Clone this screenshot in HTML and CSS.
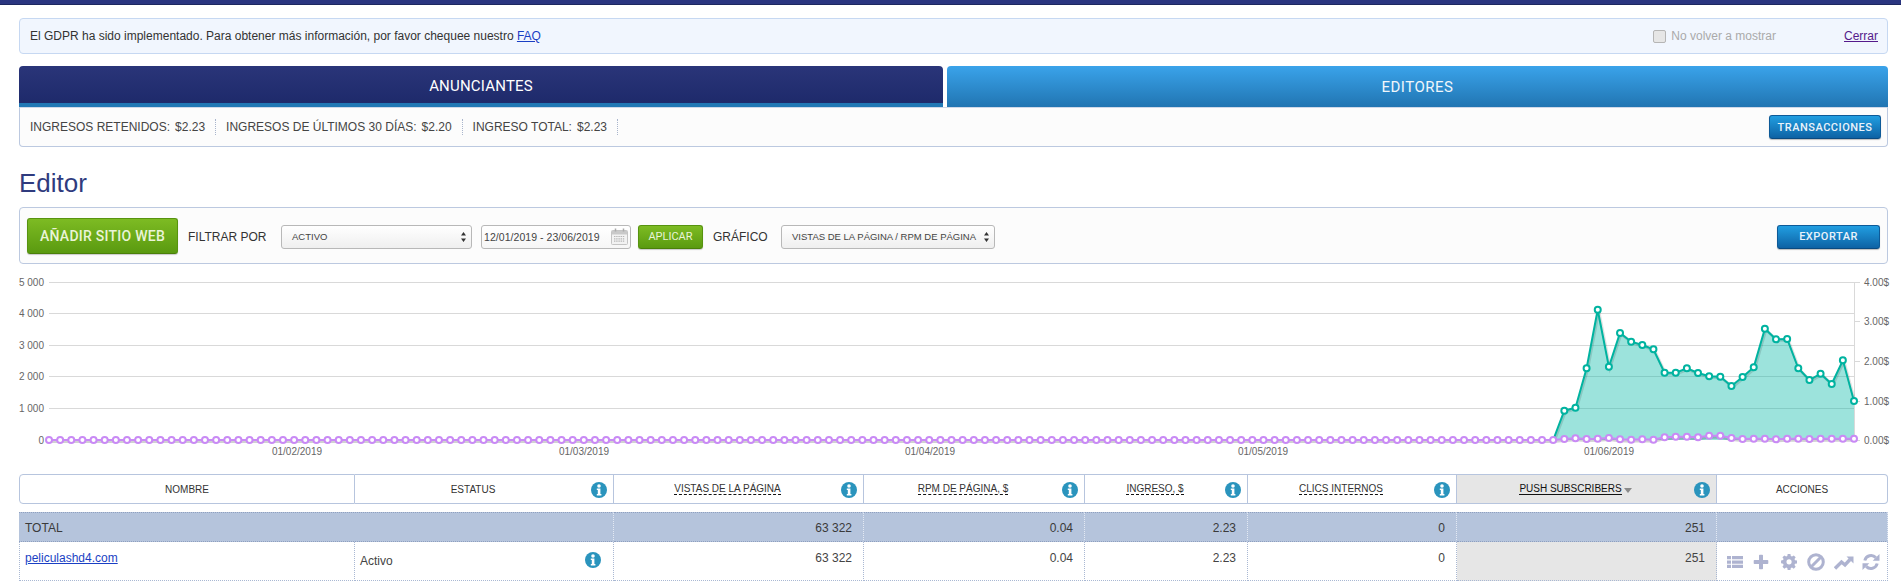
FILE: index.html
```html
<!DOCTYPE html>
<html lang="es">
<head>
<meta charset="utf-8">
<title>Editor</title>
<link rel="stylesheet" href="styles.css">
</head>
<body>
<svg class="defs" aria-hidden="true">
  <symbol id="i-info" viewBox="0 0 16 16"><circle cx="8" cy="8" r="8" fill="#2a94bd"/><circle cx="8" cy="4" r="1.8" fill="#fff"/><path d="M5.8 6.6h3.6v5.3h1v1.5H5.8v-1.5h1V8.100h-1z" fill="#fff"/></symbol>
  <symbol id="i-list" viewBox="0 0 16 16"><path d="M0 2h4v3.300H0zM5 2h11v3.300H5zM0 6.400h4v3.300H0zM5 6.400h11v3.300H5zM0 10.800h4v3.300H0zM5 10.800h11v3.300H5z"/></symbol>
  <symbol id="i-plus" viewBox="0 0 16 16"><path d="M6 1.500a.8.8 0 0 1 .8-.8h2.400a.8.800 0 0 1 .8.800V6h4.500a.8.800 0 0 1 .8.800v2.400a.8.800 0 0 1-.8.800H10v4.500a.8.800 0 0 1-.8.800H6.800a.8.800 0 0 1-.8-.800V10H1.500a.8.800 0 0 1-.8-.800V6.800a.8.800 0 0 1 .8-.800H6z"/></symbol>
  <symbol id="i-gear" viewBox="0 0 16 16"><path fill-rule="evenodd" d="M6.500 0h3l.4 2.200 1.300.6L13.100 1.500l2.100 2.100-1.300 1.900.6 1.300 2.200.4v3l-2.200.4-.6 1.300 1.300 1.900-2.100 2.100-1.900-1.300-1.300.6-.4 2.200h-3l-.4-2.200-1.300-.6-1.900 1.300-2.100-2.100 1.300-1.900-.6-1.300L-.7 10V7l2.200-.4.600-1.300L.8 3.600l2.100-2.100 1.900 1.300 1.300-.6zM8 5.700a2.800 2.800 0 1 0 0 5.600 2.800 2.800 0 0 0 0-5.600z" transform="translate(.7 0) scale(.92)"/></symbol>
  <symbol id="i-ban" viewBox="0 0 18 18"><circle cx="9" cy="9" r="7.300" fill="none" stroke="currentColor" stroke-width="3"/><path d="M4 14 14 4" stroke="currentColor" stroke-width="3"/></symbol>
  <symbol id="i-trend" viewBox="0 0 20 16"><path d="M1 14.500 7.500 8l3.500 3 5-5.500" fill="none" stroke="currentColor" stroke-width="3.400"/><path d="M12.500 2.500H19.500V9.500z"/></symbol>
  <symbol id="i-refresh" viewBox="0 0 18 18"><path d="M2.800 7.500A6.500 6.500 0 0 1 13.800 4.600" fill="none" stroke="currentColor" stroke-width="3"/><path d="M17.500 1v6.800h-6.800z"/><path d="M15.200 10.500A6.500 6.500 0 0 1 4.200 13.400" fill="none" stroke="currentColor" stroke-width="3"/><path d="M.5 17v-6.800h6.800z"/></symbol>
</svg>

<div class="topbar"></div>

<div class="section notice">
  <span>El GDPR ha sido implementado. Para obtener más información, por favor chequee nuestro <a href="#faq" class="link">FAQ</a></span>
  <label class="dismiss"><span class="checkbox"></span>No volver a mostrar</label>
  <a href="#cerrar" class="close">Cerrar</a>
</div>

<div class="section tabs">
  <div class="tab tab-dark">ANUNCIANTES</div>
  <div class="tab tab-light">EDITORES</div>
</div>

<div class="section stats">
  <div class="stat stat-first"><span>INGRESOS RETENIDOS:</span><span>$2.23</span></div>
  <div class="stat"><span>INGRESOS DE ÚLTIMOS 30 DÍAS:</span><span>$2.20</span></div>
  <div class="stat"><span>INGRESO TOTAL:</span><span>$2.23</span></div>
  <button class="btn btn-blue btn-trans">TRANSACCIONES</button>
</div>

<h1 class="section title">Editor</h1>

<div class="section panel">
  <button class="btn btn-green btn-add">AÑADIR SITIO WEB</button>
  <span class="panel-label label-filter">FILTRAR POR</span>
  <div class="select select-status"><span>ACTIVO</span><svg class="updown" viewBox="0 0 7 12"><path d="M3.500 1 6 4.500H1zM3.500 11 1 7.500h5z"/></svg></div>
  <div class="date">
    <span>12/01/2019 - 23/06/2019</span>
    <svg class="cal" viewBox="0 0 17 17"><rect x=".5" y="2.500" width="16" height="14" rx="1" fill="#f2f2f2" stroke="#c4c4c4"/><rect x="1" y="3" width="15" height="3.500" fill="#c9c9c9"/><path d="M4.500 .5v3M12.500 .5v3" stroke="#aaa" stroke-width="1.500"/><path d="M3 8.500h11M3 10.800h11M3 13.100h11" stroke="#b5b5b5" stroke-width="1.200" stroke-dasharray="1.400 .8"/></svg>
  </div>
  <button class="btn btn-green btn-apply">APLICAR</button>
  <span class="panel-label label-chart">GRÁFICO</span>
  <div class="select select-chart"><span>VISTAS DE LA PÁGINA / RPM DE PÁGINA</span><svg class="updown" viewBox="0 0 7 12"><path d="M3.500 1 6 4.500H1zM3.500 11 1 7.500h5z"/></svg></div>
  <button class="btn btn-blue btn-export">EXPORTAR</button>
</div>

<svg id="chart" class="chart" viewBox="0 264 1901 210" width="1901" height="210">
  <g class="grid">
    <path d="M49 282.500H1854M49 313.500H1854M49 345.500H1854M49 376.500H1854M49 408.500H1854M1854.500 282V440"/>
    <path d="M1854 282.500h6M1854 321.500h6M1854 361.500h6M1854 401.500h6M1854 440.500h6"/>
  </g>
  <g class="axis-left">
    <text x="44" y="286">5 000</text>
    <text x="44" y="317">4 000</text>
    <text x="44" y="349">3 000</text>
    <text x="44" y="380">2 000</text>
    <text x="44" y="412">1 000</text>
    <text x="44" y="444">0</text>
  </g>
  <g class="axis-right">
    <text x="1864" y="286">4.00$</text>
    <text x="1864" y="325">3.00$</text>
    <text x="1864" y="365">2.00$</text>
    <text x="1864" y="405">1.00$</text>
    <text x="1864" y="444">0.00$</text>
  </g>
  <g class="axis-bottom">
    <text x="297" y="455">01/02/2019</text>
    <text x="584" y="455">01/03/2019</text>
    <text x="930" y="455">01/04/2019</text>
    <text x="1263" y="455">01/05/2019</text>
    <text x="1609" y="455">01/06/2019</text>
  </g>
</svg>

<div class="section thead">
  <div class="th th-first">NOMBRE</div>
  <div class="th has-info">ESTATUS<svg class="info"><use href="#i-info"/></svg></div>
  <div class="th has-info"><span class="dotted">VISTAS DE LA PÁGINA</span><svg class="info"><use href="#i-info"/></svg></div>
  <div class="th has-info"><span class="dotted">RPM DE PÁGINA, $</span><svg class="info"><use href="#i-info"/></svg></div>
  <div class="th has-info"><span class="dotted">INGRESO, $</span><svg class="info"><use href="#i-info"/></svg></div>
  <div class="th has-info"><span class="dotted">CLICS INTERNOS</span><svg class="info"><use href="#i-info"/></svg></div>
  <div class="th has-info th-sorted"><span class="solid">PUSH SUBSCRIBERS</span><span class="caret"></span><svg class="info"><use href="#i-info"/></svg></div>
  <div class="th th-last">ACCIONES</div>
</div>

<div class="section tbody">
  <div class="td td-total td-name span-2">TOTAL</div>
  <div class="td td-total num">63 322</div>
  <div class="td td-total num">0.04</div>
  <div class="td td-total num">2.23</div>
  <div class="td td-total num">0</div>
  <div class="td td-total num">251</div>
  <div class="td td-total"></div>

  <div class="td td-row td-name"><a href="#site" class="link">peliculashd4.com</a></div>
  <div class="td td-row td-status"><span>Activo</span><svg class="info info-row"><use href="#i-info"/></svg></div>
  <div class="td td-row num">63 322</div>
  <div class="td td-row num">0.04</div>
  <div class="td td-row num">2.23</div>
  <div class="td td-row num">0</div>
  <div class="td td-row num td-sorted">251</div>
  <div class="td td-row td-actions">
    <svg class="act act-list"><use href="#i-list"/></svg>
    <svg class="act act-plus"><use href="#i-plus"/></svg>
    <svg class="act act-gear"><use href="#i-gear"/></svg>
    <svg class="act act-ban"><use href="#i-ban"/></svg>
    <svg class="act act-trend"><use href="#i-trend"/></svg>
    <svg class="act act-refresh"><use href="#i-refresh"/></svg>
  </div>
</div>
<script src="chart.js"></script>
</body>
</html>
```
FILE: styles.css
```css
* { box-sizing: border-box; }
html, body { margin: 0; padding: 0; background: #fff; }
body {
  font-family: "Liberation Sans", Arial, sans-serif;
  font-size: 12px;
  color: #444;
  overflow: hidden;
}
.defs { position: absolute; width: 0; height: 0; }
.section { margin-left: 19px; margin-right: 13px; }
.topbar { height: 5px; background: #2a3580; border-bottom: 1px solid #1d2760; }

.notice {
  display: flex;
  align-items: center;
  height: 36px;
  margin-top: 13px;
  padding: 0 9px 0 10px;
  background: #f1f6fe;
  border: 1px solid #c6d8f2;
  border-radius: 4px;
  color: #333;
}
.link { color: #1a3fc4; }
.dismiss { display: flex; align-items: center; margin-left: auto; color: #aaa; }
.checkbox {
  width: 13px; height: 13px; margin-right: 5px;
  background: #e6e6e6; border: 1px solid #b5b5b5; border-radius: 2px;
}
.close { margin-left: 68px; color: #551a8b; }

.tabs { display: flex; gap: 4px; height: 41px; margin-top: 12px; }
.tab {
  flex: 1 1 0;
  display: flex; align-items: center; justify-content: center;
  font-family: Roboto, "Liberation Sans", sans-serif;
  font-size: 15px; color: #fff; letter-spacing: .5px;
  border-radius: 4px 4px 0 0;
}
.tab-dark {
  padding-top: 3px;
  background: linear-gradient(#2a3579, #1e2a6b);
  border-bottom: 4px solid #2178b5;
  flex-basis: 924px; flex-grow: 0;
  letter-spacing: .2px;
}
.tab-light { background: linear-gradient(#3aa3ea, #2175b2); color: #f0f6fb; }

.stats {
  display: flex; align-items: center;
  height: 40px;
  padding: 0 6px 0 10px;
  background: #fcfcfc;
  border: 1px solid #bcc9e0; border-top-color: #cfd8e8;
  border-radius: 0 0 4px 4px;
}
.stat {
  display: flex; gap: 5px; align-items: center;
  height: 16px; padding: 0 10px 0 10px;
  border-right: 1px dotted #a9b5cc;
}
.stat-first { padding-left: 0; }
.btn {
  display: inline-flex; align-items: center; justify-content: center;
  font-family: Roboto, "Liberation Sans", sans-serif;
  cursor: pointer; padding: 0;
  border-radius: 3px;
}
.btn-blue {
  background: linear-gradient(#219ee1, #0e62a4);
  border: 1px solid #0d5a98; border-bottom-color: #0a4a80;
  color: #e9f3fb;
  font-size: 11px; font-weight: 500; letter-spacing: .5px;
  box-shadow: 0 1px 1px rgba(0,0,0,.25);
}
.btn-trans { margin-left: auto; width: 112px; height: 24px; }
.btn-green {
  background: linear-gradient(#7dbb23, #5a9a10);
  border: 1px solid #57930f; border-bottom-color: #4a8009;
  color: #eaf4d8;
  box-shadow: 0 1px 1px rgba(0,0,0,.2);
}

.title {
  height: 60px; margin-top: 0; margin-bottom: 0; padding-top: 21px;
  font-size: 26px; line-height: 30px; font-weight: 400; color: #2f3b7e;
}

.panel {
  display: flex; align-items: center;
  height: 57px; padding: 1px 7px 0 7px;
  background: #fcfcfc;
  border: 1px solid #bcc9e0; border-radius: 4px;
}
.btn-add { width: 151px; height: 36px; font-size: 14px; font-weight: 500; letter-spacing: .25px; }
.panel-label { color: #333; margin-top: 1px; }
.label-filter { margin-left: 10px; width: 93px; }
.label-chart { margin-left: 10px; width: 68px; }
.select {
  display: flex; align-items: center; justify-content: space-between;
  height: 24px; margin-top: 1px;
  background: linear-gradient(#fff, #efefef);
  border: 1px solid #b8b8b8; border-radius: 3px;
  font-size: 9.500px; color: #444;
}
.select-status { width: 191px; padding: 0 4px 0 10px; }
.select-chart { width: 214px; padding: 0 4px 0 10px; }
.updown { width: 7px; height: 12px; fill: #333; }
.date {
  display: flex; align-items: center; justify-content: space-between;
  width: 150px; height: 24px; margin: 1px 0 0 9px; padding: 0 2px 0 2px;
  background: linear-gradient(#fff, #f6f6f6);
  border: 1px solid #b8b8b8; border-radius: 3px;
  font-size: 10.500px; letter-spacing: .05px; color: #444;
}
.cal { width: 17px; height: 17px; }
.btn-apply { width: 65px; height: 24px; margin: 1px 0 0 7px; font-size: 11px; }
.btn-export { width: 103px; height: 24px; margin: 1px 0 0 auto; }

.chart { display: block; }
.grid path { fill: none; stroke: #d9d9d9; stroke-width: 1; }
.axis-left text, .axis-right text, .axis-bottom text { font-size: 10px; fill: #666; }
.axis-left text { text-anchor: end; }
.axis-bottom text { text-anchor: middle; }

.thead, .tbody {
  display: grid;
  grid-template-columns: 336px 259px 250px 221px 163px 209px 260px 171px;
}
.th {
  position: relative;
  display: flex; align-items: center; justify-content: center;
  height: 30px;
  background: #fff;
  border: 1px solid #b7c5de; border-left: 0;
  font-size: 10px; color: #333;
}
.th-first { border-left: 1px solid #b7c5de; border-radius: 4px 0 0 4px; }
.th-last { border-radius: 0 4px 4px 0; }
.has-info { padding-right: 22px; }
.th-sorted { background: #e6e6e6; }
.dotted { border-bottom: 1px dashed #111; line-height: 11px; }
.solid { border-bottom: 1px solid #111; line-height: 11px; color: #111; }
.caret {
  width: 0; height: 0; margin-left: 2px; margin-top: 2px;
  border-left: 4px solid transparent; border-right: 4px solid transparent;
  border-top: 5px solid #8a8a8a;
}
.info { position: absolute; right: 6px; top: 7px; width: 16px; height: 16px; }

.tbody { margin-top: 8px; font-size: 12px; color: #444; }
.td {
  position: relative;
  border-right: 1px dotted #a9b8d3;
  border-bottom: 1px dotted #a9b8d3;
}
.td-total {
  display: flex; align-items: center;
  height: 30px; padding-top: 1px;
  background: #b5c4dc;
  border-top: 1px dotted #8fa0bf;
  border-bottom-color: #8fa0bf;
  border-right-color: #e3e9f3;
  color: #3a3a3a;
}
.span-2 { grid-column: span 2; }
.td-row { height: 39px; padding-top: 9px; line-height: 14px; }
.td-name { padding-left: 6px; }
.td-row.td-name { border-left: 1px dotted #a9b8d3; padding-left: 5px; }
.num { padding-right: 11px; justify-content: flex-end; text-align: right; }
.td-status { padding: 12px 0 0 5px; }
.info-row { right: 12px; top: 10px; }
.td-sorted { background: #e6e6e6; }
.td-actions {
  display: flex; align-items: center; padding: 0 0 0 10px;
}
.act { flex: none; fill: #aeb3d0; color: #aeb3d0; margin-top: 1px; }
.act-list { width: 16px; height: 16px; }
.act-plus { width: 16px; height: 16px; margin-left: 10px; }
.act-gear { width: 16px; height: 16px; margin-left: 12px; }
.act-ban { width: 18px; height: 18px; margin-left: 10px; }
.act-trend { width: 20px; height: 16px; margin-left: 9px; }
.act-refresh { width: 18px; height: 18px; margin-left: 8px; }
```
FILE: chart.js
```js
(function () {
  var NS = 'http://www.w3.org/2000/svg';
  var svg = document.getElementById('chart');
  var X0 = 49, DX = 11.142, N = 163, Y0 = 440;
  var tealRaw = [510,422,413,295,119,290,189,215,225,238,308,308,295,309,319,320,348,321,292,176,208,207,295,330,311,342,271,393];
  var purpRaw = [510,507,505,507,506,504,508,509,508,509,502,500,500,502,497,497,504,507,506,506,508,506,506,507,506,506,506,506];
  function series(raw) {
    var pts = [];
    for (var i = 0; i < N; i++) {
      var j = i - (N - raw.length);
      pts.push([X0 + DX * i, j < 0 ? Y0 : 270 + raw[j] / 3]);
    }
    return pts;
  }
  function el(name, attrs, parent) {
    var e = document.createElementNS(NS, name);
    for (var k in attrs) e.setAttribute(k, attrs[k]);
    (parent || svg).appendChild(e);
    return e;
  }
  function str(pts) {
    return pts.map(function (p) { return p[0].toFixed(1) + ',' + p[1].toFixed(1); }).join(' ');
  }
  var teal = series(tealRaw), purp = series(purpRaw);
  var tealVisible = teal.slice(N - tealRaw.length);
  el('polygon', { points: str(tealVisible) + ' ' + (X0 + DX * (N - 1)).toFixed(1) + ',' + Y0 + ' ' + tealVisible[0][0].toFixed(1) + ',' + Y0, fill: 'rgba(0,184,165,.39)' });
  el('polyline', { points: str(tealVisible), fill: 'none', stroke: 'rgba(0,0,0,.12)', 'stroke-width': 3, transform: 'translate(1 1)' });
  el('polyline', { points: str(tealVisible), fill: 'none', stroke: '#00b3a0', 'stroke-width': 2 });
  tealVisible.slice(1).forEach(function (p) {
    el('circle', { cx: p[0], cy: p[1], r: 3, fill: '#fff', stroke: '#00b3a0', 'stroke-width': 2 });
  });
  el('polyline', { points: str(purp), fill: 'none', stroke: 'rgba(0,0,0,.18)', 'stroke-width': 3, transform: 'translate(0 1.5)' });
  el('polyline', { points: str(purp), fill: 'none', stroke: '#c98af5', 'stroke-width': 2 });
  purp.forEach(function (p) {
    el('circle', { cx: p[0], cy: p[1], r: 3, fill: '#fff', stroke: '#c98af5', 'stroke-width': 2 });
  });
})();
```
